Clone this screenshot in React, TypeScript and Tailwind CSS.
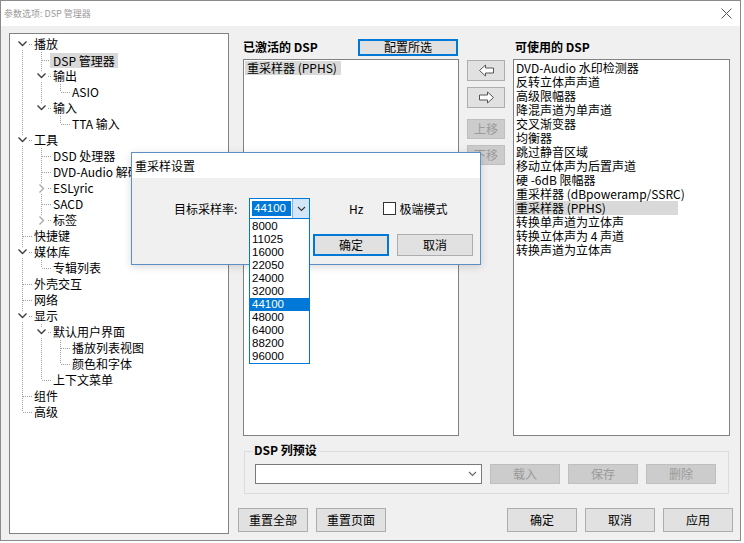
import React from "react";

type Node = { t: string; open?: boolean; closed?: boolean; sel?: boolean; c?: Node[] };

const TREE: Node[] = [
  {
    t: "播放",
    open: true,
    c: [
      { t: "DSP 管理器", sel: true },
      { t: "输出", open: true, c: [{ t: "ASIO" }] },
      { t: "输入", open: true, c: [{ t: "TTA 输入" }] },
    ],
  },
  {
    t: "工具",
    open: true,
    c: [
      { t: "DSD 处理器" },
      { t: "DVD-Audio 解码" },
      { t: "ESLyric", closed: true },
      { t: "SACD" },
      { t: "标签", closed: true },
    ],
  },
  { t: "快捷键" },
  { t: "媒体库", open: true, c: [{ t: "专辑列表" }] },
  { t: "外壳交互" },
  { t: "网络" },
  {
    t: "显示",
    open: true,
    c: [
      { t: "默认用户界面", open: true, c: [{ t: "播放列表视图" }, { t: "颜色和字体" }] },
      { t: "上下文菜单" },
    ],
  },
  { t: "组件" },
  { t: "高级" },
];

const AVAILABLE = [
  "DVD-Audio 水印检测器",
  "反转立体声声道",
  "高级限幅器",
  "降混声道为单声道",
  "交叉渐变器",
  "均衡器",
  "跳过静音区域",
  "移动立体声为后置声道",
  "硬 -6dB 限幅器",
  "重采样器 (dBpoweramp/SSRC)",
  "重采样器 (PPHS)",
  "转换单声道为立体声",
  "转换立体声为 4 声道",
  "转换声道为立体声",
];

const RATES = ["8000", "11025", "16000", "22050", "24000", "32000", "44100", "48000", "64000", "88200", "96000"];

type Row = { n: Node; depth: number; guides: boolean[]; last: boolean; first: boolean };

function flatten(nodes: Node[], depth: number, guides: boolean[], out: Row[]) {
  nodes.forEach((n, i) => {
    const last = i === nodes.length - 1;
    out.push({ n, depth, guides, last, first: depth === 0 && i === 0 });
    if (n.c && n.open) flatten(n.c, depth + 1, [...guides, !last], out);
  });
  return out;
}

const DOT = "#a0a0a0";

function GuideCell({ on }: { on: boolean }) {
  return (
    <svg width="19" height="16" className="shrink-0">
      {on && <line x1="9.5" y1="0" x2="9.5" y2="16" stroke={DOT} strokeDasharray="1 1" />}
    </svg>
  );
}

function NodeCell({ row }: { row: Row }) {
  const { n, last, first } = row;
  return (
    <svg width="19" height="16" className="shrink-0">
      <line x1="9.5" y1={first ? 8 : 0} x2="9.5" y2={last ? 8 : 16} stroke={DOT} strokeDasharray="1 1" />
      <line x1="10" y1="8.5" x2="19" y2="8.5" stroke={DOT} strokeDasharray="1 1" />
      {(n.open || n.closed) && <rect x="4" y="3" width="11" height="11" fill="#fff" />}
      {n.open && (
        <polyline points="5.5,5.5 9.5,9.5 13.5,5.5" fill="none" stroke="#3c3c3c" strokeWidth="1.3" />
      )}
      {n.closed && (
        <polyline points="7.5,4.5 11.5,8.5 7.5,12.5" fill="none" stroke="#a6a6a6" strokeWidth="1.3" />
      )}
    </svg>
  );
}

function Btn({
  children,
  className = "",
  disabled,
  focus,
}: {
  children: React.ReactNode;
  className?: string;
  disabled?: boolean;
  focus?: boolean;
}) {
  const look = disabled
    ? "bg-[#cccccc] border border-[#bfbfbf] text-[#9a9a9a]"
    : focus
      ? "bg-[#e1e1e1] border-2 border-[#0078d7] text-black"
      : "bg-[#e1e1e1] border border-[#adadad] text-black";
  return (
    <div className={`flex shrink-0 items-center justify-center leading-none ${look} ${className}`}>{children}</div>
  );
}

function Arrow({ dir }: { dir: "l" | "r" }) {
  const pts =
    dir === "l"
      ? "1.5,6.5 7.5,1 7.5,4 15.5,4 15.5,9 7.5,9 7.5,12"
      : "15.5,6.5 9.5,1 9.5,4 1.5,4 1.5,9 9.5,9 9.5,12";
  return (
    <svg width="17" height="13">
      <polygon points={pts} fill="#fff" stroke="#555" strokeWidth="1" strokeLinejoin="round" />
    </svg>
  );
}

function Chevron({ color = "#555" }: { color?: string }) {
  return (
    <svg width="9" height="6">
      <polyline points="1,1 4.5,4.5 8,1" fill="none" stroke={color} strokeWidth="1.1" />
    </svg>
  );
}

export default function App() {
  const rows = flatten(TREE, 0, [], []);

  return (
    <div className="relative h-[543px] w-[744px] overflow-hidden bg-white font-['Noto_Sans_CJK_SC',sans-serif] text-[12px] leading-[16px] text-black">
      <div className="flex h-[541px] w-[741px] flex-col border border-[#8a8a8a] bg-[#f0f0f0]">
        {/* title bar */}
        <div className="flex h-[25px] shrink-0 items-center bg-white pl-[3px]">
          <span className="text-[9px] leading-[12px] text-[#9a9a9a]">参数选项: DSP 管理器</span>
          <svg width="11" height="11" className="ml-auto mr-[8px]">
            <path d="M0.5 0.5 L10.5 10.5 M10.5 0.5 L0.5 10.5" stroke="#555" strokeWidth="1" />
          </svg>
        </div>

        <div className="flex flex-1">
          {/* tree */}
          <div className="ml-[8px] mt-[7px] h-[501px] w-[220px] shrink-0 border border-[#828282] bg-white pl-[3px] pt-[2px]">
            {rows.map((r, i) => (
              <div key={i} className="flex h-[16px] items-center whitespace-nowrap">
                {r.guides.map((g, j) => (
                  <GuideCell key={j} on={g} />
                ))}
                <NodeCell row={r} />
                <span
                  className={
                    r.n.sel
                      ? "ml-[-1px] h-[15px] bg-[#d9d9d9] pl-[3px] pr-[3px] leading-[15px]"
                      : "ml-[2px] leading-[16px]"
                  }
                >
                  {r.n.t}
                </span>
              </div>
            ))}
          </div>

          {/* right side */}
          <div className="ml-[9px] flex w-[495px] flex-col pt-[12px]">
            <div className="flex">
              {/* active */}
              <div className="ml-[5px] w-[216px]">
                <div className="flex h-[18px] items-center justify-between">
                  <span className="font-bold">已激活的 DSP</span>
                  <Btn focus className="mr-[1px] h-[17px] w-[100px]">
                    配置所选
                  </Btn>
                </div>
                <div className="mt-[3px] h-[377px] border border-[#828282] bg-white pl-[1px] pt-[1px]">
                  <div className="h-[14px] w-[96px] whitespace-nowrap bg-[#d9d9d9] pl-[2px] leading-[14px]">
                    重采样器 (PPHS)
                  </div>
                </div>
              </div>

              {/* move buttons */}
              <div className="ml-[8px] flex w-[38px] flex-col pt-[22px]">
                <Btn className="h-[21px] w-[38px]">
                  <Arrow dir="l" />
                </Btn>
                <Btn className="mt-[6px] h-[21px] w-[38px]">
                  <Arrow dir="r" />
                </Btn>
                <Btn disabled className="mt-[11px] h-[20px] w-[38px]">
                  上移
                </Btn>
                <Btn disabled className="mt-[6px] h-[20px] w-[38px]">
                  下移
                </Btn>
              </div>

              {/* available */}
              <div className="ml-[8px] w-[217px]">
                <div className="flex h-[18px] items-center pl-[2px]">
                  <span className="font-bold">可使用的 DSP</span>
                </div>
                <div className="mt-[3px] h-[377px] overflow-hidden border border-[#828282] bg-white pl-[1px] pt-[1px]">
                  {AVAILABLE.map((a) => (
                    <div
                      key={a}
                      className={`h-[14px] w-[163px] whitespace-nowrap pl-[1px] leading-[14px] ${
                        a === "重采样器 (PPHS)" ? "bg-[#d9d9d9]" : ""
                      }`}
                    >
                      {a}
                    </div>
                  ))}
                </div>
              </div>
            </div>

            {/* presets */}
            <div className="relative ml-[6px] mt-[15px] h-[43px] w-[485px] border border-[#dcdcdc]">
              <span className="absolute left-[8px] top-[-10px] bg-[#f0f0f0] px-[1px] font-bold">DSP 列预设</span>
              <div className="flex pl-[10px] pt-[12px]">
                <div className="flex h-[20px] w-[227px] items-center justify-end border border-[#7a7a7a] bg-white pr-[4px]">
                  <Chevron color="#666" />
                </div>
                <Btn disabled className="ml-[8px] h-[20px] w-[70px]">
                  载入
                </Btn>
                <Btn disabled className="ml-[8px] h-[20px] w-[70px]">
                  保存
                </Btn>
                <Btn disabled className="ml-[8px] h-[20px] w-[70px]">
                  删除
                </Btn>
              </div>
            </div>

            {/* bottom buttons */}
            <div className="mt-[14px] flex justify-between">
              <div className="flex gap-[8px]">
                <Btn className="h-[24px] w-[70px]">重置全部</Btn>
                <Btn className="h-[24px] w-[70px]">重置页面</Btn>
              </div>
              <div className="flex gap-[8px]">
                <Btn className="h-[24px] w-[70px]">确定</Btn>
                <Btn className="h-[24px] w-[70px]">取消</Btn>
                <Btn className="h-[24px] w-[70px]">应用</Btn>
              </div>
            </div>
          </div>
        </div>
      </div>

      {/* resample dialog */}
      <div className="absolute left-[131px] top-[152px] h-[113px] w-[350px] border border-[#5d8fc6] bg-[#f0f0f0] shadow-[0_2px_8px_rgba(0,0,0,0.15)]">
        <div className="flex h-[25px] items-center bg-white pl-[3px]">重采样设置</div>
        <div className="mt-[20px] flex h-[21px] items-center pl-[42px]">
          <span className="w-[64px] whitespace-nowrap">目标采样率:</span>
          <div className="ml-[11px] flex h-[21px] w-[61px] border border-[#0078d7] bg-white">
            <div className="flex flex-1 items-center pl-[2px]">
              <span className="h-[15px] w-[39px] bg-[#0078d7] pl-[2px] font-['Liberation_Sans',sans-serif] text-[11.5px] leading-[15px] text-white">
                44100
              </span>
            </div>
            <div className="flex w-[17px] items-center justify-center border-l border-[#7eb4ea] bg-[#d4e7f8]">
              <Chevron color="#333" />
            </div>
          </div>
          <span className="ml-[39px]">Hz</span>
          <div className="ml-[20px] h-[13px] w-[13px] border border-[#333] bg-white" />
          <span className="ml-[3px]">极端模式</span>
        </div>
        <div className="mt-[15px] flex pl-[181px]">
          <Btn focus className="h-[22px] w-[76px]">
            确定
          </Btn>
          <Btn className="ml-[8px] h-[22px] w-[76px]">取消</Btn>
        </div>
      </div>

      {/* open dropdown */}
      <div className="absolute left-[249px] top-[218px] h-[146px] w-[61px] border border-[#0078d7] bg-white pt-[1px] font-['Liberation_Sans',sans-serif] text-[11.5px]">
        {RATES.map((r) => (
          <div
            key={r}
            className={`h-[13px] pl-[2px] leading-[13px] ${r === "44100" ? "bg-[#0078d7] text-white" : ""}`}
          >
            {r}
          </div>
        ))}
      </div>
    </div>
  );
}
